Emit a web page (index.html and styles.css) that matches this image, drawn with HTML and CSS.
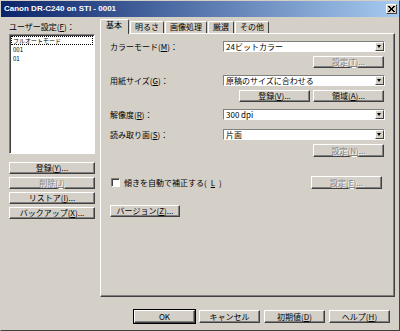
FILE: index.html
```html
<!DOCTYPE html>
<html lang="ja">
  <head>
    <meta charset="UTF-8" />
    <title>Canon DR-C240 on STI - 0001</title>
    <link rel="stylesheet" href="styles.css">
  </head>
  <body>
    <div class="ventana">
      <div class="titulo">
        <span>Canon DR-C240 on STI - 0001</span>
        <span class="cerrar">
          <svg width="7" height="6" viewBox="0 0 7 6"><path d="M0 0L6 6M1 0L7 6M6 0L0 6M7 0L1 6" stroke="#000" stroke-width="1"/></svg>
        </span>
      </div>
      <div class="cuerpo">
        <!-- columna izquierda: ajustes de usuario -->
        <div class="izquierda">
          <div class="etiqueta-lista">ユーザー設定(<u>F</u>)：</div>
          <div class="lista">
            <div class="item activo">フルオートモード</div>
            <div class="item">001</div>
            <div class="item">01</div>
          </div>
          <div class="botones-izq">
            <div class="boton">登録(<u>Y</u>)...</div>
            <div class="boton inactivo">削除(<u>J</u>)</div>
            <div class="boton">リストア(<u>I</u>)...</div>
            <div class="boton">バックアップ(<u>X</u>)...</div>
          </div>
        </div>
        <!-- columna derecha: pestañas -->
        <div class="derecha">
          <div class="pestanas">
            <div class="pestana elegida">基本</div>
            <div class="pestana">明るさ</div>
            <div class="pestana">画像処理</div>
            <div class="pestana">厳選</div>
            <div class="pestana">その他</div>
          </div>
          <div class="panel">
            <div class="fila f1">
              <div class="rotulo">カラーモード(<u>M</u>)：</div>
              <div class="combo"><span>24ビットカラー</span><span class="flecha"></span></div>
            </div>
            <div class="fila-botones f2">
              <div class="boton inactivo ancho">設定(<u>T</u>)...</div>
            </div>
            <div class="fila f3">
              <div class="rotulo">用紙サイズ(<u>G</u>)：</div>
              <div class="combo"><span>原稿のサイズに合わせる</span><span class="flecha"></span></div>
            </div>
            <div class="fila-botones f4">
              <div class="boton ancho">登録(<u>V</u>)...</div>
              <div class="boton ancho">領域(<u>A</u>)...</div>
            </div>
            <div class="fila f5">
              <div class="rotulo">解像度(<u>R</u>)：</div>
              <div class="combo"><span>300 dpi</span><span class="flecha"></span></div>
            </div>
            <div class="fila f6">
              <div class="rotulo">読み取り面(<u>S</u>)：</div>
              <div class="combo"><span>片面</span><span class="flecha"></span></div>
            </div>
            <div class="fila-botones f7">
              <div class="boton inactivo ancho">設定(<u>N</u>)...</div>
            </div>
            <div class="fila-check f8">
              <div class="check"><span class="caja"></span>傾きを自動で補正する(<u>L</u>)</div>
              <div class="boton inactivo ancho">設定(<u>E</u>)...</div>
            </div>
            <div class="f9">
              <div class="boton version">バージョン(<u>Z</u>)...</div>
            </div>
          </div>
        </div>
      </div>
      <div class="pie">
        <div class="boton grande foco">OK</div>
        <div class="boton grande">キャンセル</div>
        <div class="boton grande">初期値(<u>D</u>)</div>
        <div class="boton grande">ヘルプ(<u>H</u>)</div>
      </div>
    </div>
  </body>
</html>
```

FILE: styles.css
```css
/* Ventana de diálogo estilo Windows 2000 */
body {
  margin: 0;
  background-color: #d4d0c8;
}
.ventana {
  width: 400px;
  height: 331px;
  box-sizing: border-box;
  background-color: #d4d0c8;
  border: 1px solid;
  border-color: #d4d0c8 #404040 #404040 #d4d0c8;
  font-family: "Noto Sans CJK JP", "Liberation Sans", sans-serif;
  font-size: 8px;
  line-height: 10px;
  color: #000;
  overflow: hidden;
}
u {
  text-decoration: underline;
}
.titulo {
  height: 16px;
  background: linear-gradient(to right, #0a246a, #a6caf0);
  color: white;
  font-family: "Liberation Sans", Arial, sans-serif;
  font-weight: bold;
  font-size: 8px;
  display: flex;
  align-items: center;
  justify-content: space-between;
  padding: 0 2px 0 3px;
}
.cerrar {
  width: 9px;
  height: 8px;
  background-color: #d4d0c8;
  border: 1px solid;
  border-color: #fff #404040 #404040 #fff;
  display: flex;
  align-items: center;
  justify-content: center;
}

/* Disposición principal: dos columnas */
.cuerpo {
  display: grid;
  grid-template-columns: 86px 295px;
  column-gap: 5px;
  padding-left: 8px;
  padding-top: 2px;
  height: 280px;
  box-sizing: border-box;
}
.etiqueta-lista {
  height: 15px;
  line-height: 15px;
}
.lista {
  height: 117px;
  background-color: white;
  border: 1px solid;
  border-color: #808080 #fff #fff #808080;
  box-shadow: inset 1px 1px 0 #404040;
  padding: 1px 1px 0 1px;
}
.item {
  height: 9px;
  font-size: 6px;
  line-height: 9px;
  padding-left: 2px;
  white-space: nowrap;
}
.item.activo {
  outline: 1px dotted #000;
  outline-offset: -1px;
}
.botones-izq {
  margin-top: 8px;
  display: flex;
  flex-direction: column;
  gap: 3px;
}

/* Botones */
.boton {
  height: 12px;
  box-sizing: border-box;
  border: 1px solid;
  border-color: #fff #404040 #404040 #fff;
  box-shadow: inset -1px -1px 0 #808080;
  display: flex;
  align-items: center;
  justify-content: center;
  font-size: 8px;
  line-height: 8px;
  background-color: #d4d0c8;
}
.boton.inactivo {
  color: #808080;
  text-shadow: 1px 1px 0 #fff;
}
.ancho {
  width: 71px;
}

/* Pestañas */
.pestanas {
  display: flex;
  height: 14px;
  align-items: flex-end;
}
.pestana {
  height: 12px;
  box-sizing: border-box;
  padding: 0 4px;
  border: 1px solid;
  border-bottom: none;
  border-color: #fff #404040 #404040 #fff;
  border-radius: 2px 2px 0 0;
  line-height: 10px;
  margin-left: 1px;
}
.pestana.elegida {
  height: 15px;
  margin-left: 0;
  margin-bottom: -1px;
  position: relative;
  background-color: #d4d0c8;
  padding: 0 6px 0 5px;
  z-index: 1;
}
.panel {
  height: 264px;
  box-sizing: border-box;
  border: 1px solid;
  border-color: #fff #404040 #404040 #fff;
  box-shadow: inset -1px -1px 0 #808080;
  padding: 0 10px 0 9px;
}
.fila {
  display: grid;
  grid-template-columns: 113px 162px;
  align-items: center;
  height: 11px;
}
.combo {
  height: 11px;
  box-sizing: border-box;
  background-color: white;
  border: 1px solid;
  border-color: #808080 #fff #fff #808080;
  display: flex;
  justify-content: space-between;
  align-items: center;
  padding-left: 2px;
  line-height: 9px;
}
.flecha {
  width: 9px;
  height: 9px;
  box-sizing: border-box;
  background-color: #d4d0c8;
  border: 1px solid;
  border-color: #fff #404040 #404040 #fff;
  position: relative;
}
.flecha::after {
  content: "";
  position: absolute;
  left: 1px;
  top: 2px;
  border-left: 2.5px solid transparent;
  border-right: 2.5px solid transparent;
  border-top: 3px solid #000;
}
.fila-botones {
  display: flex;
  justify-content: flex-end;
  gap: 3px;
}
.f1 { margin-top: 7px; }
.f2 { margin-top: 4px; }
.f3 { margin-top: 7px; }
.f4 { margin-top: 4px; }
.f5 { margin-top: 7px; }
.f6 { margin-top: 9px; }
.f7 { margin-top: 4px; }
.f7 .boton { height: 13px; }
.fila-check {
  margin-top: 19px;
  display: flex;
  justify-content: space-between;
  align-items: center;
  padding-right: 2px;
}
.fila-check .boton {
  height: 13px;
}
.check {
  display: flex;
  align-items: center;
  gap: 4px;
  padding-left: 1px;
}
.caja {
  width: 9px;
  height: 9px;
  box-sizing: border-box;
  background-color: white;
  border: 1px solid;
  border-color: #808080 #fff #fff #808080;
  box-shadow: inset 1px 1px 0 #404040;
}
.f9 {
  margin-top: 16px;
}
.version {
  width: 70px;
}

/* Botones de abajo */
.pie {
  display: flex;
  justify-content: flex-end;
  gap: 4px;
  padding: 13px 9px 0 0;
}
.grande {
  width: 61px;
  height: 13px;
}
.foco {
  outline: 1px solid #000;
}
```
